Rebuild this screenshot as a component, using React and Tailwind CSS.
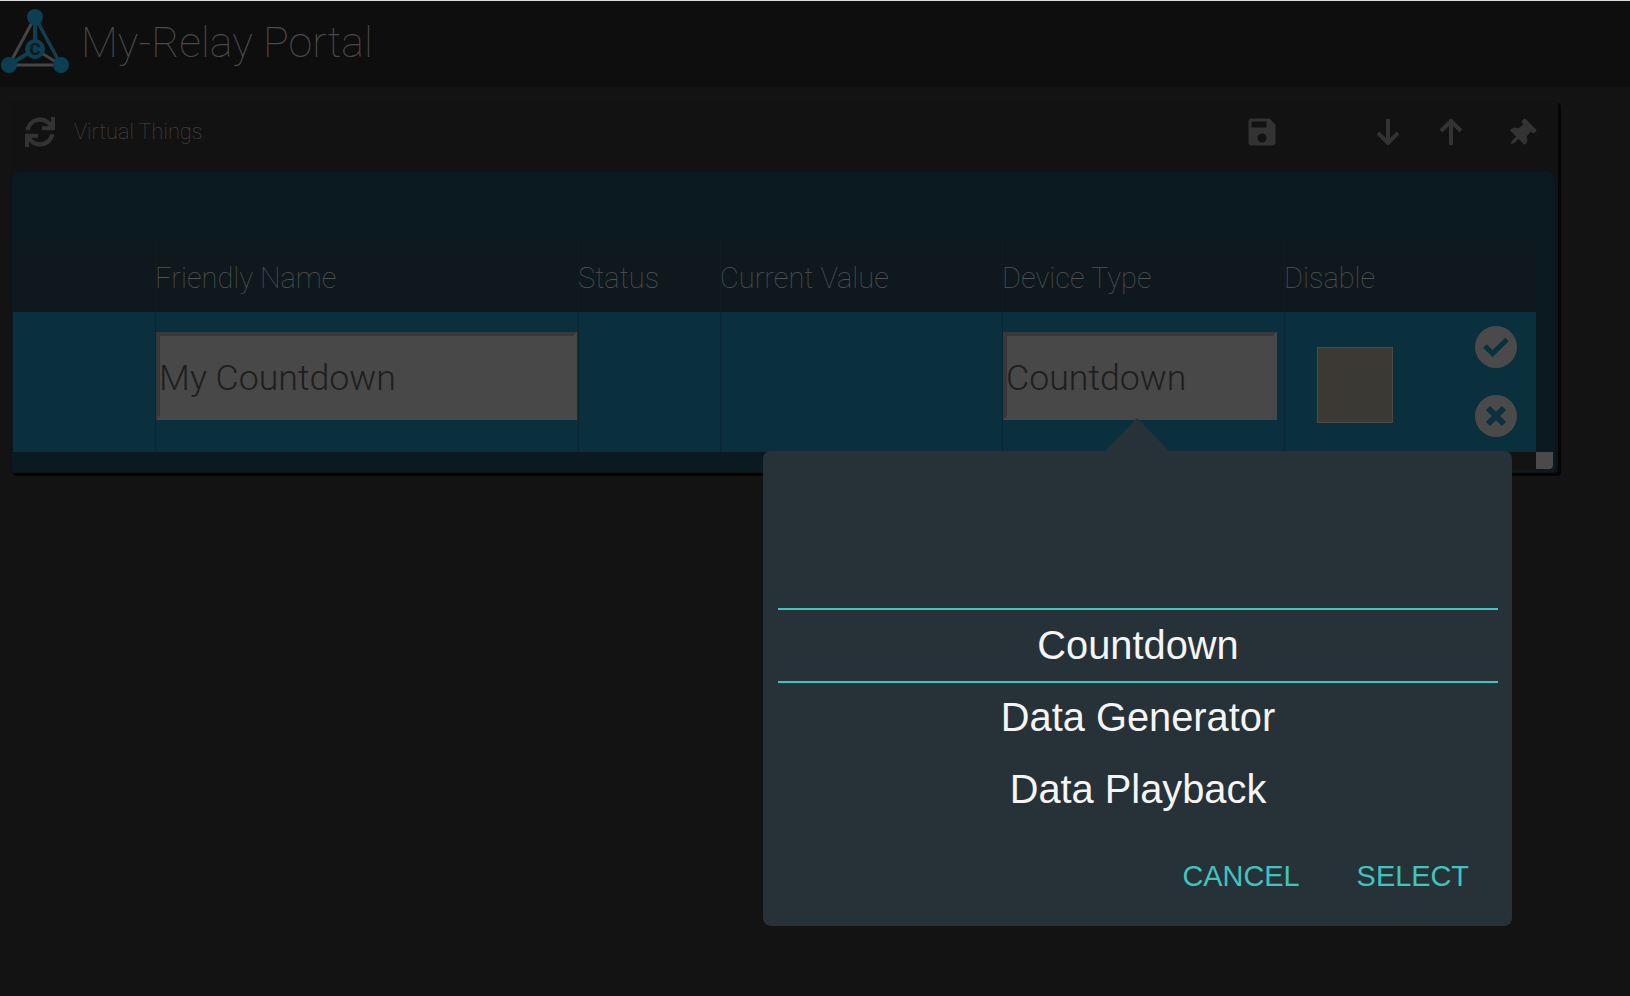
import React from "react";
import { FaSync, FaThumbtack } from "react-icons/fa";
import { MdSave } from "react-icons/md";

const Logo = () => (
  <svg width="72" height="74" viewBox="0 0 72 74" className="shrink-0">
    <path d="M35 16L9 64H61Z" fill="none" stroke="#444" strokeWidth="3" />
    <path d="M35 16V48M9 64L35 48" fill="none" stroke="#0d3f52" strokeWidth="4" />
    <path d="M35 16L61 64" fill="none" stroke="#0d3f52" strokeWidth="3" />
    <path d="M35 48L61 64" fill="none" stroke="#444" strokeWidth="3" />
    <circle cx="35" cy="16" r="8" fill="#0d3f52" />
    <circle cx="9" cy="64" r="8" fill="#0d3f52" />
    <circle cx="61" cy="64" r="8" fill="#0d3f52" />
    <circle cx="35" cy="48" r="10" fill="#0d3f52" />
    <text x="35" y="54" textAnchor="middle" fontSize="17" fontWeight="700" fontFamily="Roboto, sans-serif" fill="#141414">C</text>
  </svg>
);

const ArrowDown = ({ className }) => (
  <svg width="24" height="26" viewBox="0 0 24 26" className={className}>
    <path d="M12 0V24M2 14L12 24L22 14" fill="none" stroke="currentColor" strokeWidth="4" />
  </svg>
);

const ArrowUp = ({ className }) => (
  <svg width="24" height="26" viewBox="0 0 24 26" className={className}>
    <path d="M12 26V2M2 12L12 2L22 12" fill="none" stroke="currentColor" strokeWidth="4" />
  </svg>
);

const HeadCell = ({ children }) => (
  <div className="border-l border-[#0f1c22] h-full flex items-center pt-[6px] text-[29px] font-thin text-[#525252]">
    <span className="-ml-px">{children}</span>
  </div>
);

const Field = ({ children }) => (
  <div className="h-[88px] border-4 border-t-[#383838] border-l-[#383838] border-r-[#484848] border-b-[#484848] bg-[#484848] flex items-center pt-[6px] text-[35.7px] font-light text-[#1e1e1e] leading-none">
    <span className="-ml-px">{children}</span>
  </div>
);

const PickerItem = ({ children }) => (
  <div className="h-[72px] flex items-center justify-center pb-[2px] text-[39.8px] text-[#f5f5f5]">{children}</div>
);

export default function App() {
  return (
    <div className="relative h-[996px] w-full overflow-hidden bg-[#131313] font-['Roboto',sans-serif]">
      <header className="h-[87px] border-t border-[#dddddd] bg-[#0e0e0e] flex items-start">
        <Logo />
        <div className="ml-[9px] mt-[13px] text-[43px] font-thin leading-[56px] text-[#4a4a4a]">My-Relay Portal</div>
      </header>

      <section className="ml-[10px] mt-[13px] w-[1548px] h-[373px] bg-[#121212] shadow-[3px_3px_0_#050505] rounded-sm">
        <div className="h-[72px] pb-[8px] pr-[23px] flex items-center text-[#333]">
          <FaSync className="ml-[15px] text-[30px]" />
          <div className="ml-[19px] text-[21.7px] font-thin text-[#4a4a4a]">Virtual Things</div>
          <MdSave className="ml-auto text-[36px]" />
          <ArrowDown className="ml-[96px]" />
          <ArrowUp className="ml-[39px]" />
          <FaThumbtack className="ml-[44px] mt-[3px] text-[28px] rotate-45" />
        </div>

        <div className="ml-[2px] w-[1543px] h-[300px] rounded-t-lg rounded-b-sm bg-[#0a1a20] pt-[68px] flex flex-col">
          <div className="ml-px w-[1523px] h-[72px] bg-[#0e181d] grid grid-cols-[142px_423px_142px_282px_282px_142px_1fr]">
            <div />
            <HeadCell>Friendly Name</HeadCell>
            <HeadCell>Status</HeadCell>
            <HeadCell>Current Value</HeadCell>
            <HeadCell>Device Type</HeadCell>
            <HeadCell>Disable</HeadCell>
            <div />
          </div>
          <div className="ml-px w-[1523px] h-[140px] bg-[#0a303e] grid grid-cols-[142px_423px_142px_282px_282px_1fr]">
            <div />
            <div className="border-l border-[#0a2632] pt-[20px] pr-px"><Field>My Countdown</Field></div>
            <div className="border-l border-[#0a2632]" />
            <div className="border-l border-[#0a2632]" />
            <div className="border-l border-[#0a2632] pt-[20px] pr-[7px]"><Field>Countdown</Field></div>
            <div className="border-l border-[#0a2632] flex">
              <div className="ml-[32px] mt-[35px] w-[76px] h-[76px] bg-[#3a3934] border border-[#4a4a4a]" />
              <div className="ml-[82px] mt-[14px] flex flex-col gap-[27px]">
                <div className="w-[42px] h-[42px] rounded-full bg-[#4a4a4a] flex items-center justify-center text-[#0a303e]">
                  <svg width="26" height="20" viewBox="0 0 26 20"><path d="M2 9L9.5 16.5L24 2.5" fill="none" stroke="currentColor" strokeWidth="5" /></svg>
                </div>
                <div className="w-[42px] h-[42px] rounded-full bg-[#4a4a4a] flex items-center justify-center text-[#0a303e]">
                  <svg width="22" height="22" viewBox="0 0 22 22"><path d="M3 3L19 19M19 3L3 19" fill="none" stroke="currentColor" strokeWidth="6" /></svg>
                </div>
              </div>
            </div>
          </div>
          <div className="h-[17px] flex justify-end">
            <div className="w-[30px] bg-[#131313]" />
            <div className="w-[17px] bg-[#4a4a4a] rounded-br-sm" />
            <div className="w-[2px]" />
          </div>
        </div>
      </section>

      <div className="absolute left-[763px] top-[451px] w-[749px] h-[475px] rounded-lg bg-[#263238] font-['Liberation_Sans',Arial,sans-serif]">
        <div className="absolute left-[342px] -top-[33px] w-0 h-0 border-x-[32px] border-x-transparent border-b-[33px] border-b-[#263238]" />
        <div className="ml-[15px] mr-[14px] pt-[157px]">
          <div className="border-y-2 border-[#40c4bd] h-[75px] flex items-center justify-center text-[39.8px] text-[#f5f5f5]">Countdown</div>
          <PickerItem>Data Generator</PickerItem>
          <PickerItem>Data Playback</PickerItem>
        </div>
        <div className="mt-[29px] pr-[43px] flex justify-end gap-[57px] text-[28.9px] text-[#40c4bd] leading-[40px]">
          <span>CANCEL</span>
          <span>SELECT</span>
        </div>
      </div>
    </div>
  );
}
